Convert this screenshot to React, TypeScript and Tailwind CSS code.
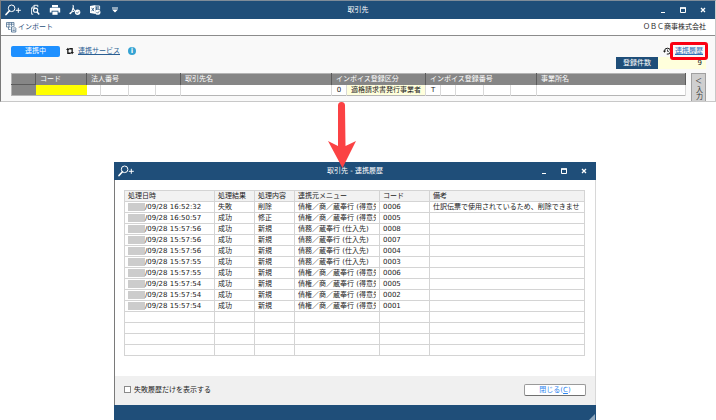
import type { ReactNode } from "react";

type LogRow = {
  time: string;
  result: string;
  kind: string;
  menu: string;
  code: string;
  note?: string;
};

const SALES = "債権／商／蔵奉行 (得意先)";
const PURCHASE = "債務／蔵奉行 (仕入先)";

const rows: LogRow[] = [
  { time: "/09/28 16:52:32", result: "失敗", kind: "削除", menu: SALES, code: "0006", note: "仕訳伝票で使用されているため、削除できませ" },
  { time: "/09/28 16:50:57", result: "成功", kind: "修正", menu: SALES, code: "0005" },
  { time: "/09/28 15:57:56", result: "成功", kind: "新規", menu: PURCHASE, code: "0008" },
  { time: "/09/28 15:57:56", result: "成功", kind: "新規", menu: PURCHASE, code: "0007" },
  { time: "/09/28 15:57:56", result: "成功", kind: "新規", menu: PURCHASE, code: "0004" },
  { time: "/09/28 15:57:55", result: "成功", kind: "新規", menu: PURCHASE, code: "0003" },
  { time: "/09/28 15:57:55", result: "成功", kind: "新規", menu: SALES, code: "0006" },
  { time: "/09/28 15:57:54", result: "成功", kind: "新規", menu: SALES, code: "0005" },
  { time: "/09/28 15:57:54", result: "成功", kind: "新規", menu: SALES, code: "0002" },
  { time: "/09/28 15:57:54", result: "成功", kind: "新規", menu: SALES, code: "0001" },
];

const EMPTY_ROWS = [0, 1, 2, 3];

function SearchPlusIcon() {
  return (
    <svg className="h-3 w-4 shrink-0" viewBox="0 0 16 12" fill="none" stroke="currentColor">
      <circle cx="6.6" cy="4.3" r="3.3" strokeWidth="1" />
      <path d="M4.2 6.9 1 10.6" strokeWidth="1.6" strokeLinecap="round" />
      <path d="M13.3 3.8v5M10.8 6.3h5" strokeWidth="1" />
    </svg>
  );
}

function PreviewIcon() {
  return (
    <svg className="h-3 w-3" viewBox="0 0 12 12" fill="none" stroke="currentColor">
      <path d="M8.8 3.2V1.3H5.2L2.6 4v6.2h1.6M5.2 1.3V4H2.6" strokeWidth="0.9" />
      <circle cx="6.6" cy="6.2" r="2.1" strokeWidth="1.1" />
      <path d="M8 7.8 10.2 10.4" strokeWidth="1.5" />
    </svg>
  );
}

function PrinterIcon() {
  return (
    <svg className="h-3 w-3" viewBox="0 0 12 12" fill="currentColor">
      <path d="M3 1h6v2.2H3zM1.6 3.8h8.8c.5 0 .8.3.8.8v4H9.4V6.8H2.6v1.8H.8v-4c0-.5.3-.8.8-.8z" />
      <path d="M3.4 7.6h5.2v3.2H3.4z" />
    </svg>
  );
}

function PdfIcon() {
  return (
    <svg className="h-3 w-3" viewBox="0 0 12 12" fill="none" stroke="currentColor">
      <path d="M3.6 1.2c1.2 0 .6 2.6 0 4.4S1.6 9.8 1 9.6s1.8-2 4.5-2.3" strokeWidth="1.1" />
      <path d="M4.1 4c.4 1.3 1 2.2 1.9 2.9" strokeWidth="1.1" />
      <circle cx="8.6" cy="8.3" r="2.7" fill="currentColor" stroke="none" />
      <path d="m7.2 8.3 1 1 1.8-1.9" stroke="#1f4e79" strokeWidth="0.8" />
    </svg>
  );
}

function ExcelIcon() {
  return (
    <svg className="h-3 w-3" viewBox="0 0 12 12" fill="none">
      <path d="M1 2 6.6 1v9L1 9z" fill="currentColor" />
      <path d="m2.6 3.8 2.4 3.4M5 3.8 2.6 7.2" stroke="#1f4e79" strokeWidth="0.8" />
      <path d="M7 2h3.6v3.5M7.6 4h3" stroke="currentColor" strokeWidth="0.9" />
      <circle cx="8.8" cy="8.2" r="2.6" fill="currentColor" />
      <path d="m7.5 8.2 1 1 1.7-1.9" stroke="#1f4e79" strokeWidth="0.8" />
    </svg>
  );
}

function MoreIcon() {
  return (
    <svg className="h-3 w-3" viewBox="0 0 12 12" fill="currentColor">
      <path d="M3 3.5h6v1H3zM3 5.5h6L6 8.5z" />
    </svg>
  );
}

function ImportIcon() {
  return (
    <svg className="h-3 w-3" viewBox="0 0 12 12" fill="none" stroke="#3d6388">
      <path d="M5.5 8.5h-2V6M1.5 6V1.5H9V5M1.5 3.2H9M4 1.5v4.5M6.5 1.5V5M1.5 6h4" strokeWidth="0.7" />
      <path d="M6.5 5.8h2.8l1.5 1.5V11H6.5z" strokeWidth="0.8" />
      <path d="M7.5 8h2.3M7.5 9.5h2.3" strokeWidth="0.7" />
    </svg>
  );
}

function SyncIcon() {
  return (
    <svg className="h-2 w-2" viewBox="0 0 8 8" fill="#1a1a1a">
      <path d="M1.9.8 3.8 3H2.5v2.6h1.6l1 1.3H1.2V3H0z" />
      <path d="M6.1 7.2 4.2 5h1.3V2.4H3.9l-1-1.3h3.9V5H8z" />
    </svg>
  );
}

function HistoryIcon() {
  return (
    <svg className="h-2 w-2" viewBox="0 0 8 8" fill="none" stroke="#1a1a1a">
      <path d="M1.5 4.2a3 3 0 1 1 2.3 2.9" strokeWidth="1" />
      <path d="M0 3.8h3L1.5 5.8z" fill="#1a1a1a" stroke="none" />
      <path d="M4.5 2.5v1.9h1.4" strokeWidth="0.8" />
    </svg>
  );
}

function WindowButtons() {
  return (
    <div className="flex items-center gap-2">
      <button aria-label="最小化" className="flex h-3 w-3 items-center justify-center">
        <svg className="h-2 w-2" viewBox="0 0 8 8">
          <path d="M2 6.5h4" stroke="currentColor" />
        </svg>
      </button>
      <button aria-label="最大化" className="flex h-3 w-3 items-center justify-center">
        <svg className="h-2 w-2" viewBox="0 0 8 8" fill="none">
          <path d="M1.5 2h5v4.5h-5z" stroke="currentColor" />
          <path d="M1 2h6" stroke="currentColor" strokeWidth="1.5" />
        </svg>
      </button>
      <button aria-label="閉じる" className="flex h-3 w-3 items-center justify-center">
        <svg className="h-2 w-2" viewBox="0 0 8 8">
          <path d="m2 2 4 4M6 2 2 6" stroke="currentColor" strokeWidth="1.3" />
        </svg>
      </button>
    </div>
  );
}

function TitleBar({ title, children }: { title: string; children: ReactNode }) {
  return (
    <header className="grid h-[18px] grid-cols-[1fr_auto_1fr] items-center bg-[#1f4e79] text-white">
      <div className="flex items-center gap-2 pl-1">{children}</div>
      <h1>{title}</h1>
      <div className="flex justify-end pr-1.5">
        <WindowButtons />
      </div>
    </header>
  );
}

function PartnerGrid() {
  const head = "border-r border-[#5c5c5c] px-1 text-left font-normal";
  const cell = "border-r border-[#d9d9d9]";
  return (
    <table className="w-full table-fixed border-collapse border border-[#b5b5b5] leading-[10px]">
      <colgroup>
        <col className="w-[24px]" />
        <col className="w-[51px]" />
        <col className="w-[14px]" />
        <col className="w-[28px]" />
        <col className="w-[27px]" />
        <col className="w-[25px]" />
        <col className="w-[151px]" />
        <col className="w-[15px]" />
        <col className="w-[79px]" />
        <col className="w-[15px]" />
        <col className="w-[15px]" />
        <col className="w-[28px]" />
        <col className="w-[27px]" />
        <col className="w-[26px]" />
        <col />
      </colgroup>
      <thead>
        <tr className="h-[11px] bg-[#868686] text-white">
          <th className={head} />
          <th className={head}>コード</th>
          <th className={head} colSpan={4}>法人番号</th>
          <th className={head}>取引先名</th>
          <th className={head} colSpan={2}>インボイス登録区分</th>
          <th className={head} colSpan={5}>インボイス登録番号</th>
          <th className={head}>事業所名</th>
        </tr>
      </thead>
      <tbody>
        <tr className="h-[11px] bg-white">
          <td className="border-t border-[#5c5c5c] bg-[#868686]" />
          <td className="bg-[#ffff00]" />
          <td className={cell} />
          <td className={cell} />
          <td className={cell} />
          <td className={cell} />
          <td className={cell} />
          <td className={`${cell} text-center`}>0</td>
          <td className={`${cell} bg-[#ffffdc] text-center`}>適格請求書発行事業者</td>
          <td className={`${cell} text-center`}>T</td>
          <td className={cell} />
          <td className={cell} />
          <td className={cell} />
          <td className={cell} />
          <td className={cell} />
        </tr>
      </tbody>
    </table>
  );
}

function PartnerWindow() {
  return (
    <section className="h-[102px] overflow-hidden border border-t-[#7f8c99] border-r-[#c8c8c8] border-b-[#c8c8c8] border-l-[#7a7a7a] bg-[#f9f9f9]">
      <TitleBar title="取引先">
        <button aria-label="検索"><SearchPlusIcon /></button>
        <button aria-label="プレビュー"><PreviewIcon /></button>
        <button aria-label="印刷"><PrinterIcon /></button>
        <button aria-label="PDF"><PdfIcon /></button>
        <button aria-label="Excel"><ExcelIcon /></button>
        <button aria-label="その他"><MoreIcon /></button>
      </TitleBar>
      <div className="flex h-[17px] items-center justify-between border-b border-[#8c8c8c] bg-white pr-[9px] pl-1">
        <button className="flex items-center gap-px text-[#1f4e79]">
          <ImportIcon />
          インポート
        </button>
        <span>ＯＢＣ商事株式会社</span>
      </div>
      <div className="pr-[9px] pl-[10px]">
        <div className="flex justify-between pt-[9px]">
          <div className="flex h-3 items-center">
            <span className="mr-1.5 h-[11px] w-[49px] rounded-[2px] bg-[#1e90ff] text-center leading-[11px] text-white">連携中</span>
            <SyncIcon />
            <a href="#" className="ml-1 text-[#2b5f93] underline">連携サービス</a>
            <span className="ml-2 flex h-2 w-2 items-center justify-center rounded-full bg-[#36a3d3] font-bold text-white">i</span>
          </div>
          <div className="flex h-3 items-center gap-1 pr-[3px]">
            <HistoryIcon />
            <div className="relative">
              <a href="#" className="text-[#2f6fb5] underline">連携履歴</a>
              <span className="pointer-events-none absolute -inset-x-[5px] -inset-y-1 rounded-[3px] border-3 border-[#fa0012]" />
            </div>
          </div>
        </div>
        <dl className="flex justify-end leading-[12px]">
          <dt className="w-[42px] bg-[#1f4e79] text-center text-white">登録件数</dt>
          <dd className="w-[48px] bg-[#ffffdc] pt-px pr-1 text-right leading-[11px]">9</dd>
        </dl>
        <div className="flex items-start gap-[5px] pt-1">
          <div className="grow">
            <PartnerGrid />
          </div>
          <button className="flex h-9 w-[15px] shrink-0 flex-col items-center border border-[#a0a0a0] bg-[#cfcfcf] pt-0.5 text-[#333]">
            <span>＜</span>
            <span className="[writing-mode:vertical-rl]">入力</span>
          </button>
        </div>
      </div>
    </section>
  );
}

function HistoryTable() {
  const head = "border border-[#d4d4d4] px-[3px] text-left font-normal";
  const cell = "overflow-hidden border border-[#d4d4d4] px-[3px] whitespace-nowrap";
  return (
    <table className="w-full table-fixed border-collapse leading-[10px]">
      <colgroup>
        <col className="w-[90px]" />
        <col className="w-[40px]" />
        <col className="w-[40px]" />
        <col className="w-[85px]" />
        <col className="w-[50px]" />
        <col />
      </colgroup>
      <thead>
        <tr className="h-[11px] bg-[#f2f2f2]">
          <th className={head}>処理日時</th>
          <th className={head}>処理結果</th>
          <th className={head}>処理内容</th>
          <th className={head}>連携元メニュー</th>
          <th className={head}>コード</th>
          <th className={head}>備考</th>
        </tr>
      </thead>
      <tbody>
        {rows.map((row, idx) => (
          <tr key={idx} className="h-[11px]">
            <td className={cell}>
              <div className="flex items-center">
                <span className="h-2 w-[17px] bg-[#cccccc]" />
                {row.time}
              </div>
            </td>
            <td className={cell}>{row.result}</td>
            <td className={cell}>{row.kind}</td>
            <td className={cell}>
              <div className="overflow-hidden">{row.menu}</div>
            </td>
            <td className={cell}>{row.code}</td>
            <td className={cell}>{row.note}</td>
          </tr>
        ))}
        {EMPTY_ROWS.map((n) => (
          <tr key={n} className="h-[11px]">
            <td className={cell} />
            <td className={cell} />
            <td className={cell} />
            <td className={cell} />
            <td className={cell} />
            <td className={cell} />
          </tr>
        ))}
      </tbody>
    </table>
  );
}

function HistoryDialog() {
  return (
    <section className="mr-[120px] ml-[114px]">
      <TitleBar title="取引先 - 連携履歴">
        <SearchPlusIcon />
      </TitleBar>
      <div className="border-r border-l border-r-[#d8d8d8] border-l-[#7a7a7a] bg-white">
        <div className="pt-[10px] pr-[10px] pb-5 pl-[9px]">
          <HistoryTable />
        </div>
        <div className="flex h-[29px] items-center justify-between bg-[#f0f0f0] px-[9px] pb-0.5">
          <label className="flex items-center gap-[3px]">
            <input type="checkbox" className="h-[7px] w-[7px] appearance-none border border-[#8a8a8a] bg-white" />
            失敗履歴だけを表示する
          </label>
          <button className="h-3 w-[62px] rounded-[2px] border border-[#9a9a9a] border-b-[#707070] bg-white text-[#2f86f0]">
            閉じる(<u>C</u>)
          </button>
        </div>
      </div>
      <footer className="flex h-4 items-end justify-end bg-[#1f4e79]">
        <svg className="h-2 w-2" viewBox="0 0 8 8">
          <path d="M7 1v6H1z" fill="#8fa7bd" />
        </svg>
      </footer>
    </section>
  );
}

export default function App() {
  return (
    <main className="relative bg-white font-['DejaVu_Sans','Noto_Sans_CJK_JP',sans-serif] text-[7px] leading-[10px] text-[#222]">
      <PartnerWindow />
      <div className="h-[60px]" />
      <HistoryDialog />
      {/* Arrow from the main window down to the dialog title */}
      <svg className="absolute top-[101px] left-[327px] h-[68px] w-[30px]" viewBox="0 0 30 68" fill="#fb4244">
        <path d="M11 4.5a3.5 3.5 0 0 1 7 0l.5 40.5L29 40 15.5 67 1 40l10 5z" />
      </svg>
    </main>
  );
}
